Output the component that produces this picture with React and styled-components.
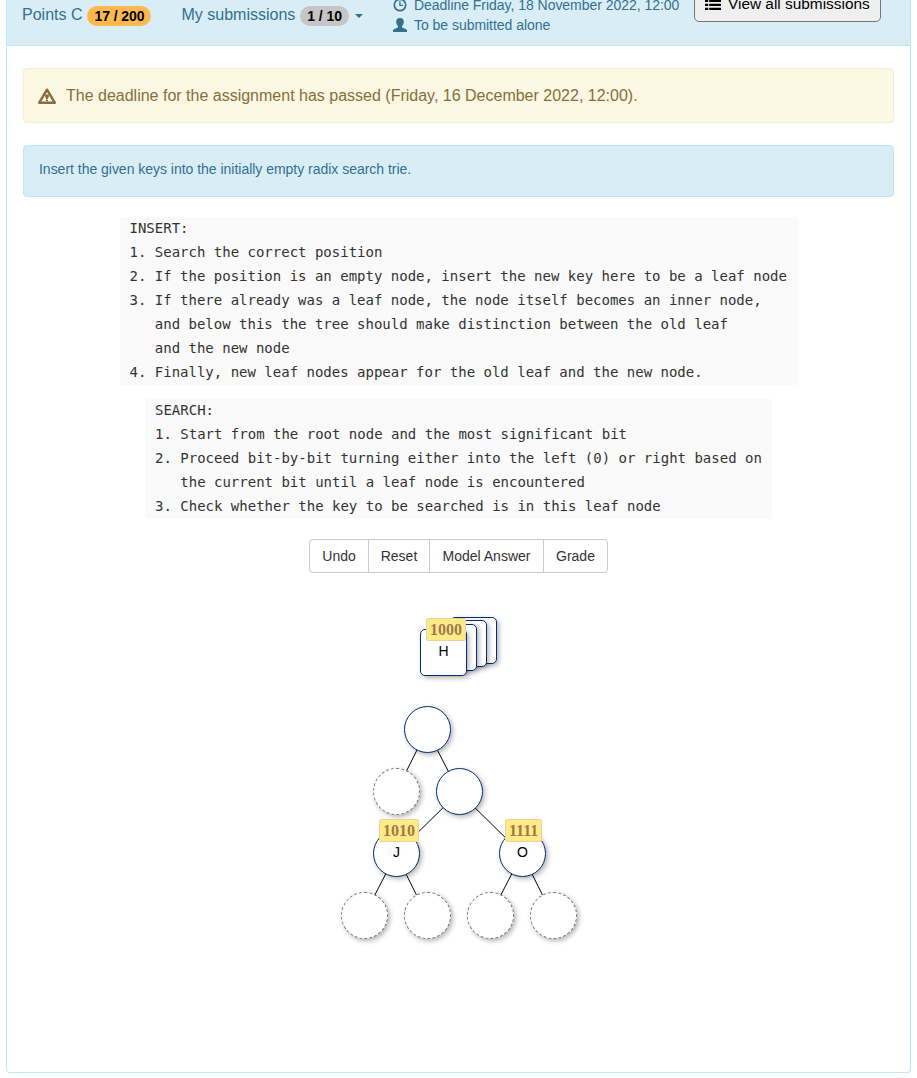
import React from "react";
import styled, { createGlobalStyle, css } from "styled-components";

const GlobalStyle = createGlobalStyle`
  *, *::before, *::after { box-sizing: border-box; }
  body {
    margin: 0;
    background: #fff;
    color: #333;
    font: 16px/1.42857 "Liberation Sans", Arial, sans-serif;
    overflow: hidden;
  }
`;

const Panel = styled.main`
  width: 905px;
  height: 1073px;
  margin-left: 6px;
  border: 1px solid #bce8f1;
  border-top: 0;
  border-radius: 0 0 4px 4px;
`;

const Header = styled.header`
  display: flex;
  align-items: flex-start;
  height: 46px;
  padding-left: 15px;
  background: #d9edf7;
  border-bottom: 1px solid #bce8f1;
  color: #31708f;
`;

const Stat = styled.div`
  display: flex;
  align-items: center;
  gap: 5px;
  width: ${(p) => p.$width}px;
  height: 30px;
  white-space: nowrap;
`;

const Badge = styled.span`
  height: 20px;
  margin-top: 2px;
  padding: 0 7px;
  border-radius: 10px;
  background: ${(p) => p.$bg};
  color: #000;
  font-size: 14px;
  font-weight: bold;
  letter-spacing: -0.08px;
  line-height: 20px;
`;

const Caret = styled.span`
  margin: 2px 0 0 1px;
  border: 4px solid transparent;
  border-top-color: #31708f;
  border-bottom: 0;
`;

const Details = styled.div`
  width: 301px;
  margin-top: -5px;
  font-size: 14px;
  letter-spacing: -0.035px;
  line-height: 20px;
  white-space: nowrap;
`;

const Detail = styled.div`
  display: flex;
  align-items: center;
  gap: 7px;
`;

const ViewButton = styled.button`
  display: flex;
  align-items: center;
  gap: 7px;
  width: 187px;
  height: 37px;
  margin-top: -15px;
  padding: 0 10px;
  border: 1px solid #767676;
  border-radius: 5px;
  background: #efefef;
  color: #000;
  font: 15.4px "Liberation Sans", Arial, sans-serif;
  white-space: nowrap;

  svg { flex: none; }
`;

const Body = styled.div`
  display: flex;
  flex-direction: column;
  align-items: center;
  padding: 22px 16px 0;
`;

const Alert = styled.div`
  display: flex;
  align-items: flex-start;
  width: 100%;
  padding: 15px;
  border: 1px solid;
  border-radius: 4px;
  ${(p) =>
    p.$kind === "warning"
      ? css`
          height: 55px;
          gap: 10px;
          margin-bottom: 22px;
          padding: 16px 14px;
          background: #fcf8e3;
          border-color: #faebcc;
          color: #8a6d3b;
        `
      : css`
          height: 52px;
          margin-bottom: 20px;
          padding-top: 13px;
          background: #d9edf7;
          border-color: #bce8f1;
          color: #31708f;
          font-size: 14px;
          letter-spacing: -0.02px;
          line-height: 20px;
        `}
`;

const AlertIcon = styled.svg`
  flex: none;
  margin-top: 3px;
`;

const Code = styled.pre`
  width: ${(p) => p.$width}px;
  margin: 0 0 ${(p) => p.$gap}px;
  padding: 0 10px;
  background: #fafafa;
  color: #333;
  font: 14px/24px "DejaVu Sans Mono", monospace;
`;

const CodeText = styled.code`
  display: block;
  margin: -1px 0 1px;
  font: inherit;
`;

const ButtonGroup = styled.div`
  display: flex;
  width: 299px;
  height: 34px;
  border: 1px solid #ccc;
  border-radius: 4px;
`;

const GroupButton = styled.button`
  flex: 0 0 ${(p) => p.$width}px;
  padding: 0;
  border: 0;
  background: none;
  color: #333;
  font: 14px/20px "Liberation Sans", Arial, sans-serif;
  & + & { border-left: 1px solid #ccc; }
`;

const Canvas = styled.div`
  position: relative;
  width: 299px;
  height: 360px;
  margin-top: 30px;
`;

const Edges = styled.svg`
  position: absolute;
  inset: 0;
  stroke: #000;
  stroke-width: 1;
`;

const Node = styled.div`
  position: absolute;
  left: ${(p) => p.$x}px;
  top: ${(p) => p.$y}px;
  width: 47px;
  height: 47px;
  border: 1px ${(p) => (p.$empty ? "dashed #777" : "solid #002d72")};
  border-radius: ${(p) => (p.$card ? "5px" : "50%")};
  background: #fff;
  box-shadow: 2px 2px 5px rgba(0, 0, 0, 0.3);
  color: #000;
  font-size: 14px;
  line-height: 42px;
  text-align: center;
`;

const KeyLabel = styled.div`
  position: absolute;
  left: ${(p) => p.$x}px;
  top: ${(p) => p.$y}px;
  height: 23px;
  padding: 0 3px;
  border: 1px solid #f1cf9f;
  border-radius: 2px;
  background: #ffeb85;
  color: #a0774f;
  font: bold 16px/22px "Liberation Serif", serif;
`;

const ClockIcon = () => (
  <svg width="14" height="14" viewBox="0 0 14 14" fill="none" stroke="currentColor">
    <circle cx="7" cy="7" r="5.7" strokeWidth="1.7" />
    <path d="M6.900 3.300v4.100H10" strokeWidth="1.300" />
  </svg>
);

const UserIcon = () => (
  <svg width="14" height="14" viewBox="0 0 14 14" fill="currentColor">
    <path d="M7 0C4.400 0 3.200 1.500 3.200 3.600c0 2 .8 3.600 1.700 4.500v.8c0 .4-.2.700-.6.9L.8 11.200c-.5.3-.8.7-.8 1.300V14h14v-1.500c0-.6-.3-1-.8-1.300L9.700 9.800c-.4-.2-.6-.5-.6-.9v-.8c.9-.9 1.700-2.500 1.700-4.500C10.800 1.500 9.600 0 7 0z" />
  </svg>
);

const ListIcon = () => (
  <svg width="16" height="16" viewBox="0 0 16 16" fill="currentColor">
    {[0, 3.700, 7.700, 11.700].map((y) => (
      <path key={y} d={`M0 ${y}h3.200v2.400H0zM4.200 ${y}H16v2.400H4.200z`} />
    ))}
  </svg>
);

const WarningIcon = () => (
  <AlertIcon width="18" height="16" viewBox="0 0 18 16">
    <path d="M9 1.700 16.700 14.700H1.300z" fill="none" stroke="currentColor" strokeWidth="2.500" strokeLinejoin="round" />
    <path d="M7.200 6.500h3.600v2.300L9.800 11H8.200L7.200 8.800zM8 11.500h2v1.800H8z" fill="currentColor" />
  </AlertIcon>
);

const insertSteps = `INSERT:
1. Search the correct position
2. If the position is an empty node, insert the new key here to be a leaf node
3. If there already was a leaf node, the node itself becomes an inner node,
   and below this the tree should make distinction between the old leaf
   and the new node
4. Finally, new leaf nodes appear for the old leaf and the new node.`;

const searchSteps = `SEARCH:
1. Start from the root node and the most significant bit
2. Proceed bit-by-bit turning either into the left (0) or right based on
   the current bit until a leaf node is encountered
3. Check whether the key to be searched is in this leaf node`;

const actions = [
  { name: "Undo", width: 58 },
  { name: "Reset", width: 61 },
  { name: "Model Answer", width: 114 },
  { name: "Grade", width: 64 },
];

const cards = [
  { x: 141, y: 14 },
  { x: 131, y: 17 },
  { x: 121, y: 21 },
  { x: 111, y: 26, text: "H" },
];

const nodes = [
  { x: 95, y: 103 },
  { x: 64, y: 165, empty: true },
  { x: 127, y: 165 },
  { x: 64, y: 227, text: "J" },
  { x: 190, y: 227, text: "O" },
  { x: 32, y: 289, empty: true },
  { x: 95, y: 289, empty: true },
  { x: 158, y: 289, empty: true },
  { x: 221, y: 289, empty: true },
];

const edges = [[0, 1], [0, 2], [2, 3], [2, 4], [3, 5], [3, 6], [4, 7], [4, 8]];

const labels = [
  { x: 117, y: 15, text: "1000" },
  { x: 70, y: 216, text: "1010" },
  { x: 196, y: 216, text: "1111" },
];

export default function App() {
  return (
    <>
      <GlobalStyle />
      <Panel>
        <Header>
          <Stat $width={159.5}>Points C <Badge $bg="#ffb84d">17 / 200</Badge></Stat>
          <Stat $width={211.5}>My submissions <Badge $bg="#c5c5c5">1 / 10</Badge><Caret /></Stat>
          <Details>
            <Detail><ClockIcon />Deadline Friday, 18 November 2022, 12:00</Detail>
            <Detail><UserIcon />To be submitted alone</Detail>
          </Details>
          <ViewButton><ListIcon />View all submissions</ViewButton>
        </Header>
        <Body>
          <Alert $kind="warning">
            <WarningIcon />
            The deadline for the assignment has passed (Friday, 16 December 2022, 12:00).
          </Alert>
          <Alert $kind="info">Insert the given keys into the initially empty radix search trie.</Alert>
          <Code $width={678} $gap={14}><CodeText>{insertSteps}</CodeText></Code>
          <Code $width={627} $gap={20}><CodeText>{searchSteps}</CodeText></Code>
          <ButtonGroup>
            {actions.map((a) => (
              <GroupButton key={a.name} $width={a.width}>{a.name}</GroupButton>
            ))}
          </ButtonGroup>
          <Canvas>
            <Edges width="299" height="360">
              {edges.map(([a, b]) => (
                <line
                  key={`${a}-${b}`}
                  x1={nodes[a].x + 23}
                  y1={nodes[a].y + 24}
                  x2={nodes[b].x + 23}
                  y2={nodes[b].y + 24}
                />
              ))}
            </Edges>
            {cards.map((c) => <Node key={c.x} $card $x={c.x} $y={c.y}>{c.text}</Node>)}
            {nodes.map((n) => (
              <Node key={`${n.x}-${n.y}`} $x={n.x} $y={n.y} $empty={n.empty}>{n.text}</Node>
            ))}
            {labels.map((l) => <KeyLabel key={l.text} $x={l.x} $y={l.y}>{l.text}</KeyLabel>)}
          </Canvas>
        </Body>
      </Panel>
    </>
  );
}
